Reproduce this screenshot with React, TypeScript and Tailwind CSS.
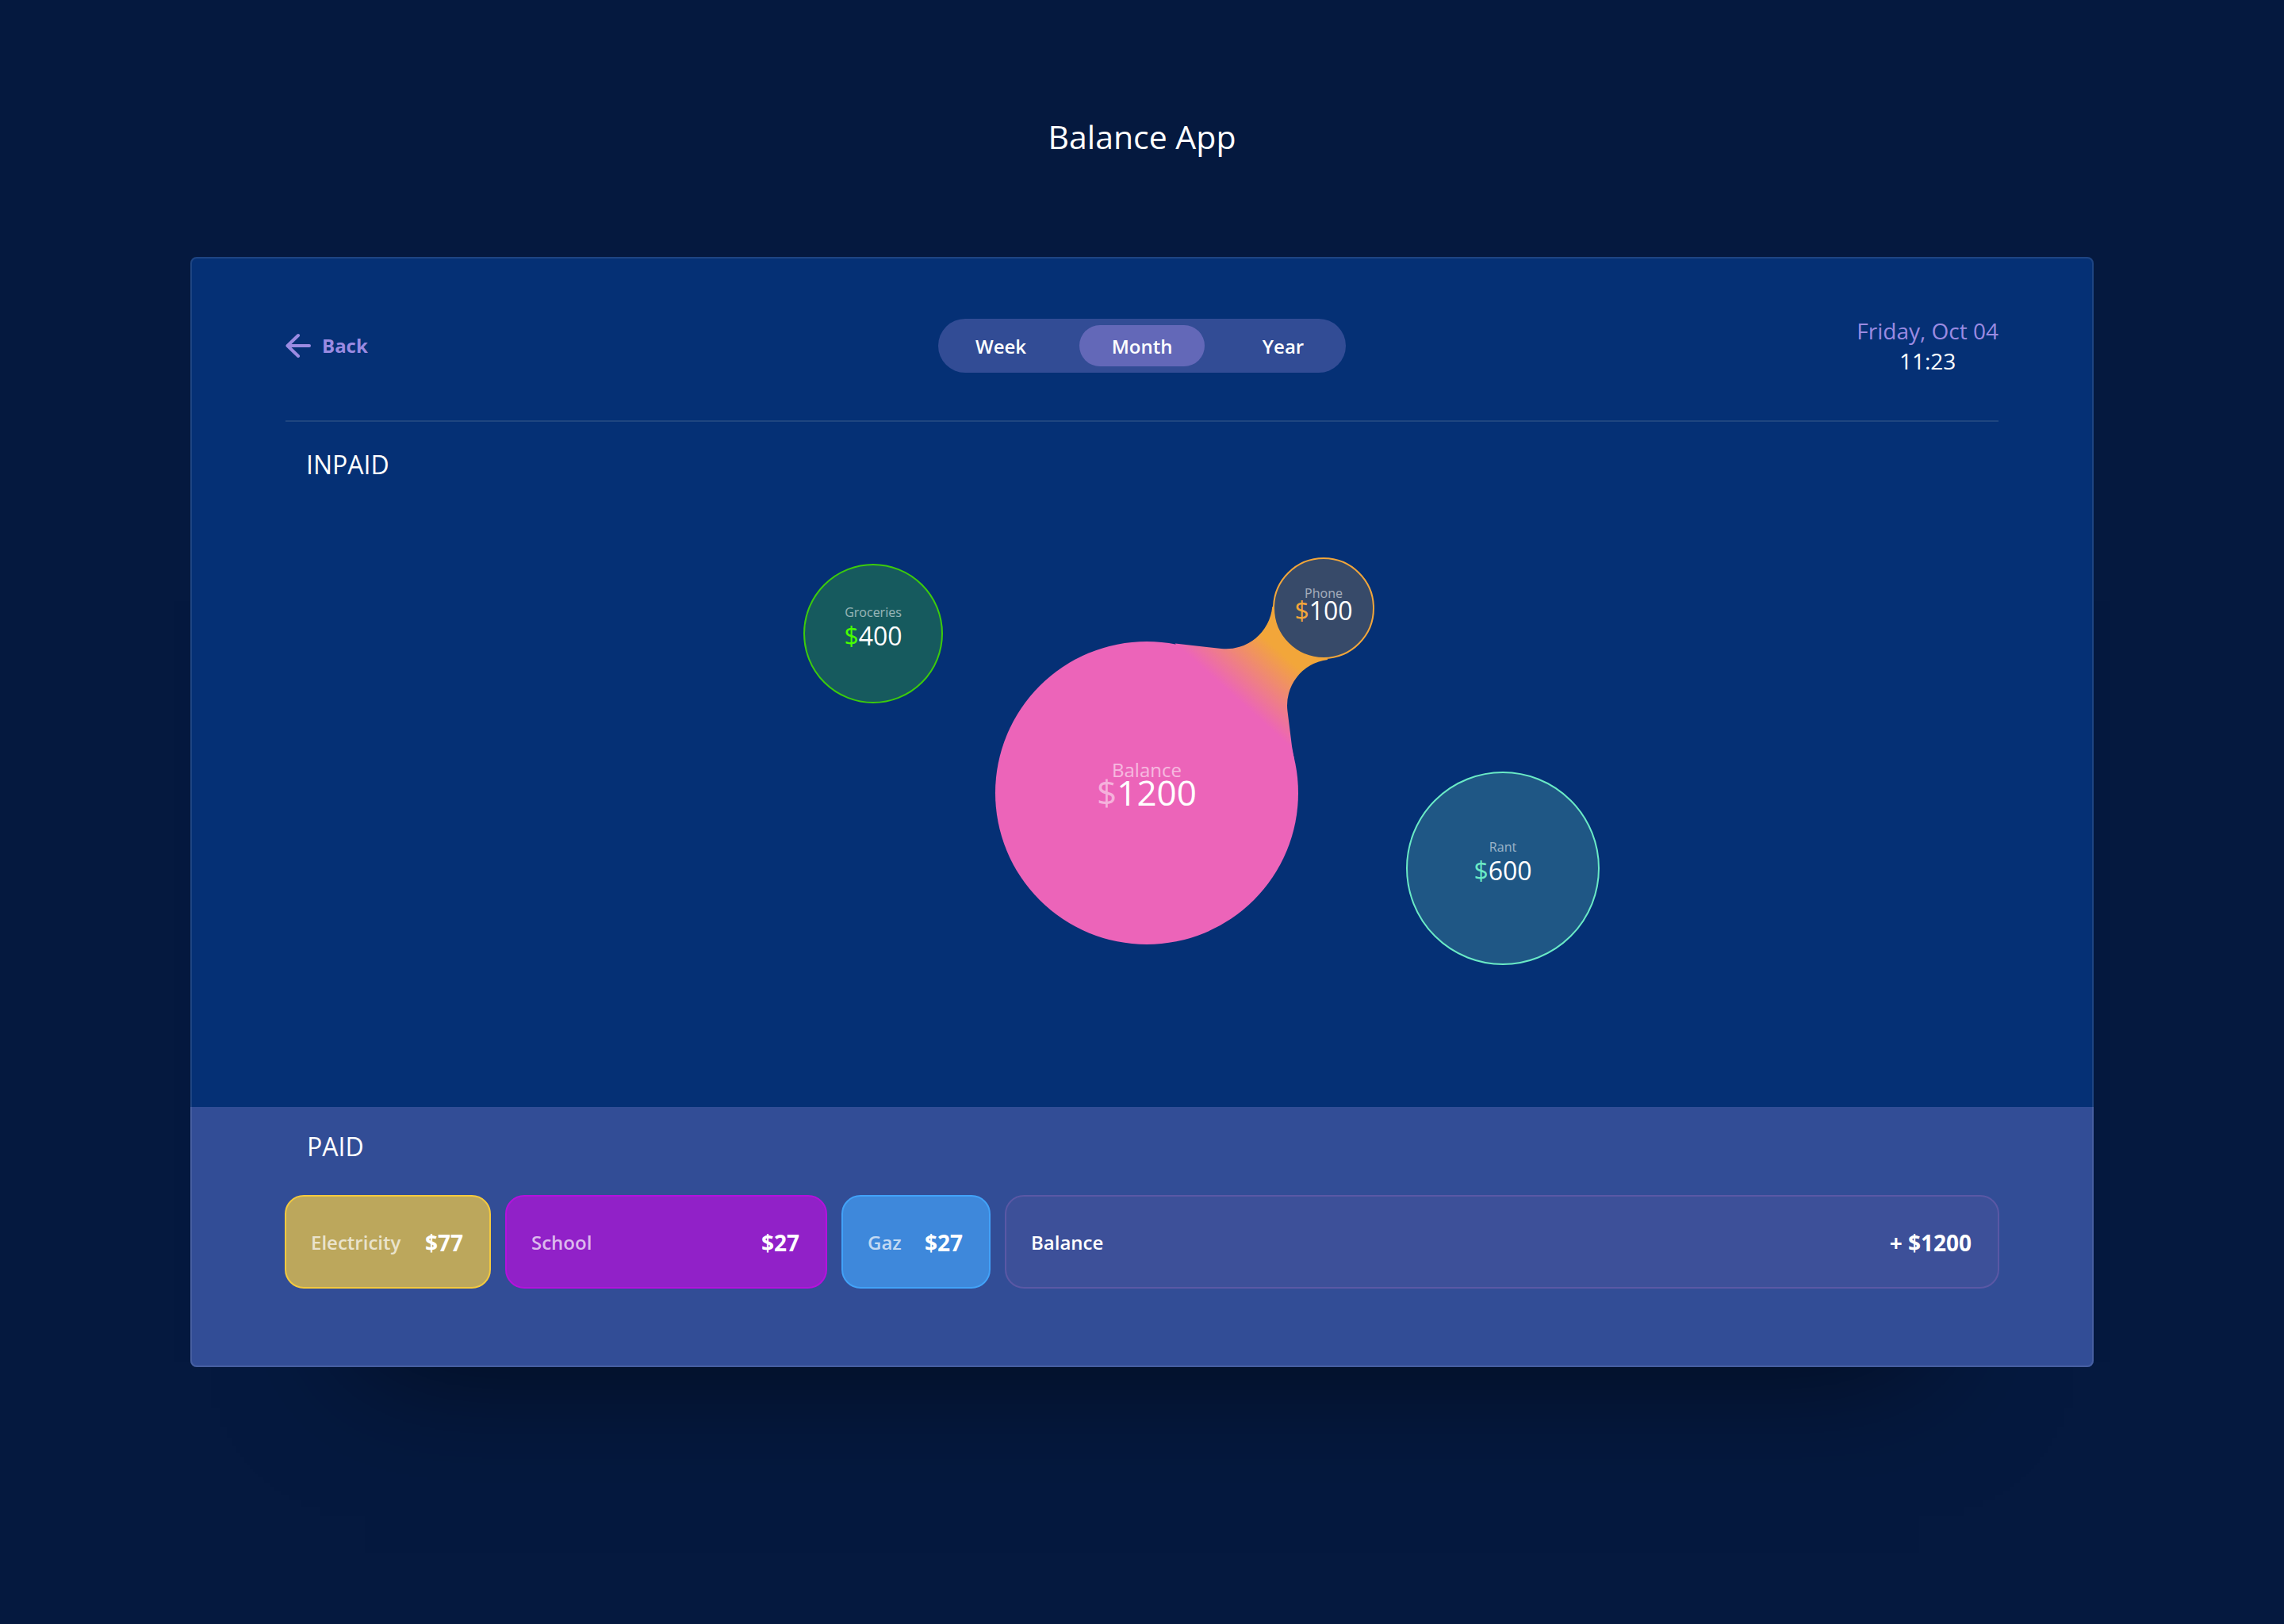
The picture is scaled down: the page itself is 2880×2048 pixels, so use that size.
const periods = [
  { label: "Week", active: false },
  { label: "Month", active: true },
  { label: "Year", active: false },
];

const payments = [
  {
    label: "Electricity",
    amount: "$77",
    box: "w-[260px] border-[#f3c93f] bg-[#bca75c]",
    text: "text-white/70",
  },
  {
    label: "School",
    amount: "$27",
    box: "w-[406px] border-[#b412dc] bg-[#9121c8]",
    text: "text-white/70",
  },
  {
    label: "Gaz",
    amount: "$27",
    box: "w-[188px] border-[#42a2f8] bg-[#3e88db]",
    text: "text-white/70",
  },
  {
    label: "Balance",
    amount: "+ $1200",
    box: "flex-1 border-[#5a58a5] bg-[#3d5099]",
    text: "text-white",
  },
];

const bubbles = [
  {
    label: "Groceries",
    amount: "400",
    circle: "left-[173px] top-[103px] size-[176px] border-2 border-[#3ccb0c] bg-[#165a5e] pb-3.5",
    labelText: "text-base leading-5 text-white/55",
    amountText: "text-[32px] leading-10",
    sign: "text-[#48ff00]",
  },
  {
    label: "Balance",
    amount: "1200",
    circle: "left-[415px] top-[201px] size-[382px] bg-[#ec64b9] pb-[26px]",
    labelText: "text-2xl leading-6 text-white/55",
    amountText: "text-[44px] leading-8",
    sign: "text-white/50",
  },
  {
    label: "Phone",
    amount: "100",
    circle: "left-[765px] top-[95px] z-10 size-32 border-2 border-[#f2a63a] bg-[#374a69] pb-2.5",
    labelText: "text-base leading-4 text-white/55",
    amountText: "text-[32px] leading-7",
    sign: "text-[#f2a63a]",
  },
  {
    label: "Rant",
    amount: "600",
    circle: "left-[933px] top-[365px] size-[244px] border-2 border-[#6aeac6] bg-[#1f5785] pb-3.5",
    labelText: "text-base leading-5 text-white/55",
    amountText: "text-[32px] leading-10",
    sign: "text-[#6aeac6]",
  },
];

function BackArrow() {
  return (
    <svg
      width="32"
      height="32"
      viewBox="0 0 32 32"
      fill="none"
      stroke="currentColor"
      strokeWidth="4"
      strokeLinecap="round"
      strokeLinejoin="round"
      aria-hidden="true"
    >
      <path d="M30 16H3M16 3L2.5 16L16 29" />
    </svg>
  );
}

/* Liquid bridge that joins the balance bubble to the phone bubble. */
function Bridge() {
  return (
    <svg
      className="absolute left-[600px] top-[90px]"
      width="260"
      height="330"
      viewBox="1440 698 260 330"
      aria-hidden="true"
    >
      <defs>
        <linearGradient id="bridge" gradientUnits="userSpaceOnUse" x1="1555" y1="877" x2="1609" y2="817">
          <stop offset="0" stopColor="#ec64b9" />
          <stop offset="1" stopColor="#f2a63a" />
        </linearGradient>
      </defs>
      <path
        fill="url(#bridge)"
        d="M1482 811.5L1540 818A58.5 58.5 0 0 0 1604.3 765L1669 767L1674 832A58 58 0 0 0 1623.5 897L1629 941L1632 958L1520 900Z"
      />
    </svg>
  );
}

export default function App() {
  return (
    <div className="flex min-h-screen flex-col items-center bg-[#05193f] pt-[142px] pb-20 font-['Open_Sans',sans-serif] text-white">
      <h1 className="mb-[122px] text-[41px] leading-[60px]">Balance App</h1>

      <main className="relative w-5/6 rounded-lg bg-[#053075] shadow-[0_214px_160px_-220px_rgba(0,0,0,0.6)] after:pointer-events-none after:absolute after:inset-0 after:rounded-lg after:border-2 after:border-white/10">
        <header className="mx-[120px] grid grid-cols-[1fr_auto_1fr] items-center border-b-2 border-[#1f4680] pt-[74px] pb-14">
          <button type="button" className="flex items-center gap-3.5 justify-self-start text-2xl font-bold text-[#9b8be2]">
            <BackArrow />
            Back
          </button>

          <nav className="flex gap-5 rounded-full bg-[#324c95] py-2">
            {periods.map((p) => (
              <button
                key={p.label}
                type="button"
                aria-pressed={p.active}
                className={
                  p.active
                    ? "h-[52px] w-[158px] rounded-full bg-[#6368b8] pt-0.5 text-2xl font-semibold"
                    : "h-[52px] w-[158px] rounded-full pt-0.5 text-2xl font-semibold"
                }
              >
                {p.label}
              </button>
            ))}
          </nav>

          <div className="justify-self-end text-center text-[28px] leading-[38px]">
            <p className="text-[#9b8be2]">Friday, Oct 04</p>
            <p>11:23</p>
          </div>
        </header>

        <section>
          <h2 className="px-[146px] pt-8 text-[32px] leading-[44px]">INPAID</h2>
          <div className="relative mx-auto h-[788px] w-[1200px]">
            {bubbles.map((b) => (
              <div
                key={b.label}
                className={"absolute flex flex-col items-center justify-center rounded-full " + b.circle}
              >
                <p className={b.labelText}>{b.label}</p>
                <p className={b.amountText}>
                  <span className={b.sign}>$</span>
                  {b.amount}
                </p>
              </div>
            ))}
            <Bridge />
          </div>
        </section>

        <section className="rounded-b-lg bg-[#324d96] px-[119px] pt-7 pb-[99px]">
          <h2 className="mb-[39px] px-7 text-[32px] leading-[44px]">PAID</h2>
          <ul className="flex gap-[18px]">
            {payments.map((p) => (
              <li
                key={p.label}
                className={"flex h-[118px] items-center justify-between rounded-3xl border-2 pt-0.5 pr-[33px] pl-[31px] " + p.box}
              >
                <span className={"text-2xl font-semibold " + p.text}>{p.label}</span>
                <span className="text-[28px] font-bold">{p.amount}</span>
              </li>
            ))}
          </ul>
        </section>
      </main>
    </div>
  );
}
